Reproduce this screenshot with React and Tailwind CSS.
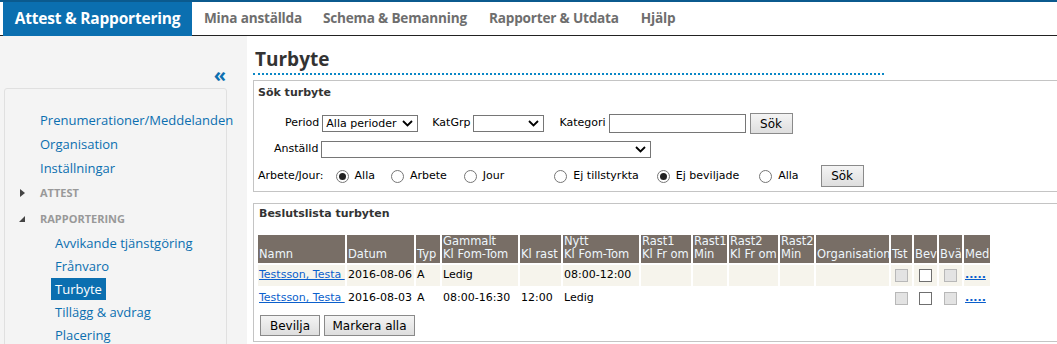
import React from "react";

const V = { fontFamily: '"DejaVu Sans", Verdana, sans-serif' };
const S = { fontFamily: '"Open Sans", "Noto Sans", sans-serif' };

function Chevron() {
  return (
    <svg width="11" height="7" viewBox="0 0 11 7" className="shrink-0">
      <path d="M1 1 L5.5 5.5 L10 1" fill="none" stroke="#000" strokeWidth="1.8" />
    </svg>
  );
}

function Select({ w, text }) {
  return (
    <div
      className="h-[17px] border border-[#767676] bg-white flex items-center justify-between pl-[3px] pr-[4px] text-[11px] text-black"
      style={{ width: w }}
    >
      <span className="leading-none">{text}</span>
      <Chevron />
    </div>
  );
}

function Radio({ checked, label, ml }) {
  return (
    <div className="flex items-center" style={{ marginLeft: ml }}>
      <div className="w-[13px] h-[13px] rounded-full border border-[#767676] bg-white flex items-center justify-center">
        {checked && <div className="w-[7px] h-[7px] rounded-full bg-[#222]" />}
      </div>
      <span className="ml-[6px]">{label}</span>
    </div>
  );
}

function Btn({ children, w, h = "h-[21px]" }) {
  return (
    <div
      className={`${h} border border-[#8a8a8a] bg-gradient-to-b from-[#f4f4f4] to-[#dedede] flex items-center justify-center text-[12px] text-black`}
      style={{ width: w }}
    >
      {children}
    </div>
  );
}

const cols = [
  { l1: "", l2: "Namn", w: 87 },
  { l1: "", l2: "Datum", w: 67 },
  { l1: "", l2: "Typ", w: 24 },
  { l1: "Gammalt", l2: "Kl Fom-Tom", w: 76 },
  { l1: "", l2: "Kl rast", w: 41 },
  { l1: "Nytt", l2: "Kl Fom-Tom", w: 76 },
  { l1: "Rast1", l2: "Kl Fr om", w: 50 },
  { l1: "Rast1", l2: "Min", w: 34 },
  { l1: "Rast2", l2: "Kl Fr om", w: 49 },
  { l1: "Rast2", l2: "Min", w: 34 },
  { l1: "", l2: "Organisation", w: 73 },
  { l1: "", l2: "Tst", w: 21 },
  { l1: "", l2: "Bev", w: 23 },
  { l1: "", l2: "Bvä", w: 23 },
  { l1: "", l2: "Med", w: 26 },
];

const rows = [
  { d: "2016-08-06", g: "Ledig", r: "", n: "08:00-12:00", bg: "bg-[#f6f4ec]" },
  { d: "2016-08-03", g: "08:00-16:30", r: "12:00", n: "Ledig", bg: "bg-white" },
];

function GrayBox() {
  return <div className="w-[13px] h-[13px] border border-[#b8b8b8] bg-[#e3e3e3] mx-auto" />;
}
function WhiteBox() {
  return <div className="w-[13px] h-[13px] border border-[#6f6f6f] bg-white mx-auto" />;
}

export default function App() {
  return (
    <div className="w-[1057px] h-[344px] overflow-hidden bg-white relative">
      {/* top nav */}
      <div className="h-[2px] bg-[#0b5a8e]" />
      <div className="h-[34px] flex items-stretch border-b border-[#222] pl-[3px]" style={S}>
        <div className="w-[189px] bg-[#0b6fb0] text-white font-bold text-[15.5px] flex items-center justify-center -mb-px tracking-[-0.2px]">
          Attest &amp; Rapportering
        </div>
        <div className="flex items-center text-[#6e6e6e] font-bold text-[13.6px] tracking-[-0.2px]">
          <span className="ml-[12px]">Mina anställda</span>
          <span className="ml-[21px]">Schema &amp; Bemanning</span>
          <span className="ml-[22px]">Rapporter &amp; Utdata</span>
          <span className="ml-[22px]">Hjälp</span>
        </div>
      </div>

      <div className="flex h-[308px]">
        {/* sidebar */}
        <div className="w-[247px] shrink-0 bg-[#f4f4f4] pl-[4px]" style={S}>
          <div className="w-[223px] flex justify-end pt-[29px] pr-[1px]">
            <span className="text-[#0b6fb0] text-[20px] font-bold leading-[20px]">«</span>
          </div>
          <div className="w-[223px] mt-[3px] h-[300px] border border-[#e0e0e0] rounded-[3px] pt-[19px] text-[13px] leading-[24px] text-[#0b6fb0]">
            <div className="pl-[35px]">Prenumerationer/Meddelanden</div>
            <div className="pl-[35px]">Organisation</div>
            <div className="pl-[35px]">Inställningar</div>
            <div className="flex items-center h-[25px] text-[#999] font-bold text-[11px]">
              <svg width="5" height="8" viewBox="0 0 5 8" className="ml-[15px] mr-[15px]">
                <path d="M0 0 L5 4 L0 8 Z" fill="#444" />
              </svg>
              ATTEST
            </div>
            <div className="flex items-center h-[27px] text-[#999] font-bold text-[11px]">
              <svg width="6" height="6" viewBox="0 0 6 6" className="ml-[14px] mr-[15px]">
                <path d="M6 0 L6 6 L0 6 Z" fill="#444" />
              </svg>
              RAPPORTERING
            </div>
            <div className="pl-[46px] leading-[23px]">
              <div className="pl-[4px]">Avvikande tjänstgöring</div>
              <div className="pl-[4px]">Frånvaro</div>
              <div className="inline-block bg-[#0b6fb0] text-white px-[4px] leading-[22px] -mt-px mb-px">Turbyte</div>
              <div className="pl-[4px]">Tillägg &amp; avdrag</div>
              <div className="pl-[4px]">Placering</div>
            </div>
          </div>
        </div>

        {/* main */}
        <div className="flex-1 overflow-hidden pl-[6px]">
          <div className="pl-[2px] w-[631px] border-b-2 border-dotted border-[#0b87c6] h-[39px] pt-[11px]" style={S}>
            <span className="text-[19px] font-bold text-[#333] leading-[24px]">Turbyte</span>
          </div>

          {/* search panel */}
          <div className="mt-[5px] w-[900px] h-[112px] border border-[#c4c4c4] text-[11px] text-black" style={V}>
            <div className="font-bold text-[#333] pl-[4px] pt-[5px] leading-[14px]">Sök turbyte</div>
            <div className="flex items-center mt-[13px] h-[21px]">
              <span className="ml-[31px]">Period</span>
              <div className="ml-[3px]"><Select w={96} text="Alla perioder" /></div>
              <span className="ml-[14px]">KatGrp</span>
              <div className="ml-[3px]"><Select w={71} text="" /></div>
              <span className="ml-[15px]">Kategori</span>
              <div className="ml-[3px] w-[137px] h-[19px] border border-[#767676] bg-white" />
              <div className="ml-[4px]"><Btn w={43}>Sök</Btn></div>
            </div>
            <div className="flex items-center mt-[7px] h-[17px]">
              <span className="ml-[20px]">Anställd</span>
              <div className="ml-[3px]"><Select w={330} text="" /></div>
            </div>
            <div className="flex items-center mt-[7px] h-[22px]">
              <span className="ml-[4px]">Arbete/Jour:</span>
              <Radio ml={12} checked label="Alla" />
              <Radio ml={16} label="Arbete" />
              <Radio ml={17} label="Jour" />
              <Radio ml={50} label="Ej tillstyrkta" />
              <Radio ml={18} checked label="Ej beviljade" />
              <Radio ml={20} label="Alla" />
              <div className="ml-[22px]"><Btn w={43} h="h-[22px]">Sök</Btn></div>
            </div>
          </div>

          {/* list panel */}
          <div className="mt-[11px] w-[900px] h-[139px] border border-[#c4c4c4] text-[11px] text-black" style={V}>
            <div className="font-bold text-[#333] pl-[5px] pt-[3px] leading-[14px]">Beslutslista turbyten</div>
            <table className="mt-[12px] ml-[2px] border-separate border-spacing-[2px] table-fixed" style={{ width: 736 }}>
              <colgroup>
                {cols.map((c, i) => (
                  <col key={i} style={{ width: c.w }} />
                ))}
              </colgroup>
              <thead>
                <tr className="h-[28px]">
                  {cols.map((c, i) => (
                    <th
                      key={i}
                      className="bg-[#786e66] text-[#eef6fc] font-normal text-left align-bottom px-[1px] pb-[2px] leading-[13px] whitespace-nowrap overflow-hidden text-[11.5px]"
                    >
                      {c.l1 && <div>{c.l1}</div>}
                      <div>{c.l2}</div>
                    </th>
                  ))}
                </tr>
              </thead>
              <tbody>
                {rows.map((r, i) => (
                  <tr key={i} className="h-[21px]">
                    <td className={`${r.bg} px-[1px] whitespace-nowrap`}>
                      <span className="text-[#0b5fcc] underline">Testsson, Testa&nbsp;</span>
                    </td>
                    <td className={`${r.bg} px-[1px] whitespace-nowrap`}>{r.d}</td>
                    <td className={`${r.bg} px-[1px]`}>A</td>
                    <td className={`${r.bg} px-[1px] whitespace-nowrap`}>{r.g}</td>
                    <td className={`${r.bg} px-[1px] whitespace-nowrap`}>{r.r}</td>
                    <td className={`${r.bg} px-[1px] whitespace-nowrap`}>{r.n}</td>
                    <td className={r.bg} />
                    <td className={r.bg} />
                    <td className={r.bg} />
                    <td className={r.bg} />
                    <td className={r.bg} />
                    <td className={r.bg}><GrayBox /></td>
                    <td className={r.bg}><WhiteBox /></td>
                    <td className={r.bg}><GrayBox /></td>
                    <td className={`${r.bg} px-[1px]`}>
                      <span className="text-[#0b5fcc] underline text-[11px] font-bold">.....</span>
                    </td>
                  </tr>
                ))}
              </tbody>
            </table>
            <div className="flex mt-[4px] ml-[6px]">
              <Btn w={60}>Bevilja</Btn>
              <div className="ml-[4px]"><Btn w={91}>Markera alla</Btn></div>
            </div>
          </div>
        </div>
      </div>
    </div>
  );
}
